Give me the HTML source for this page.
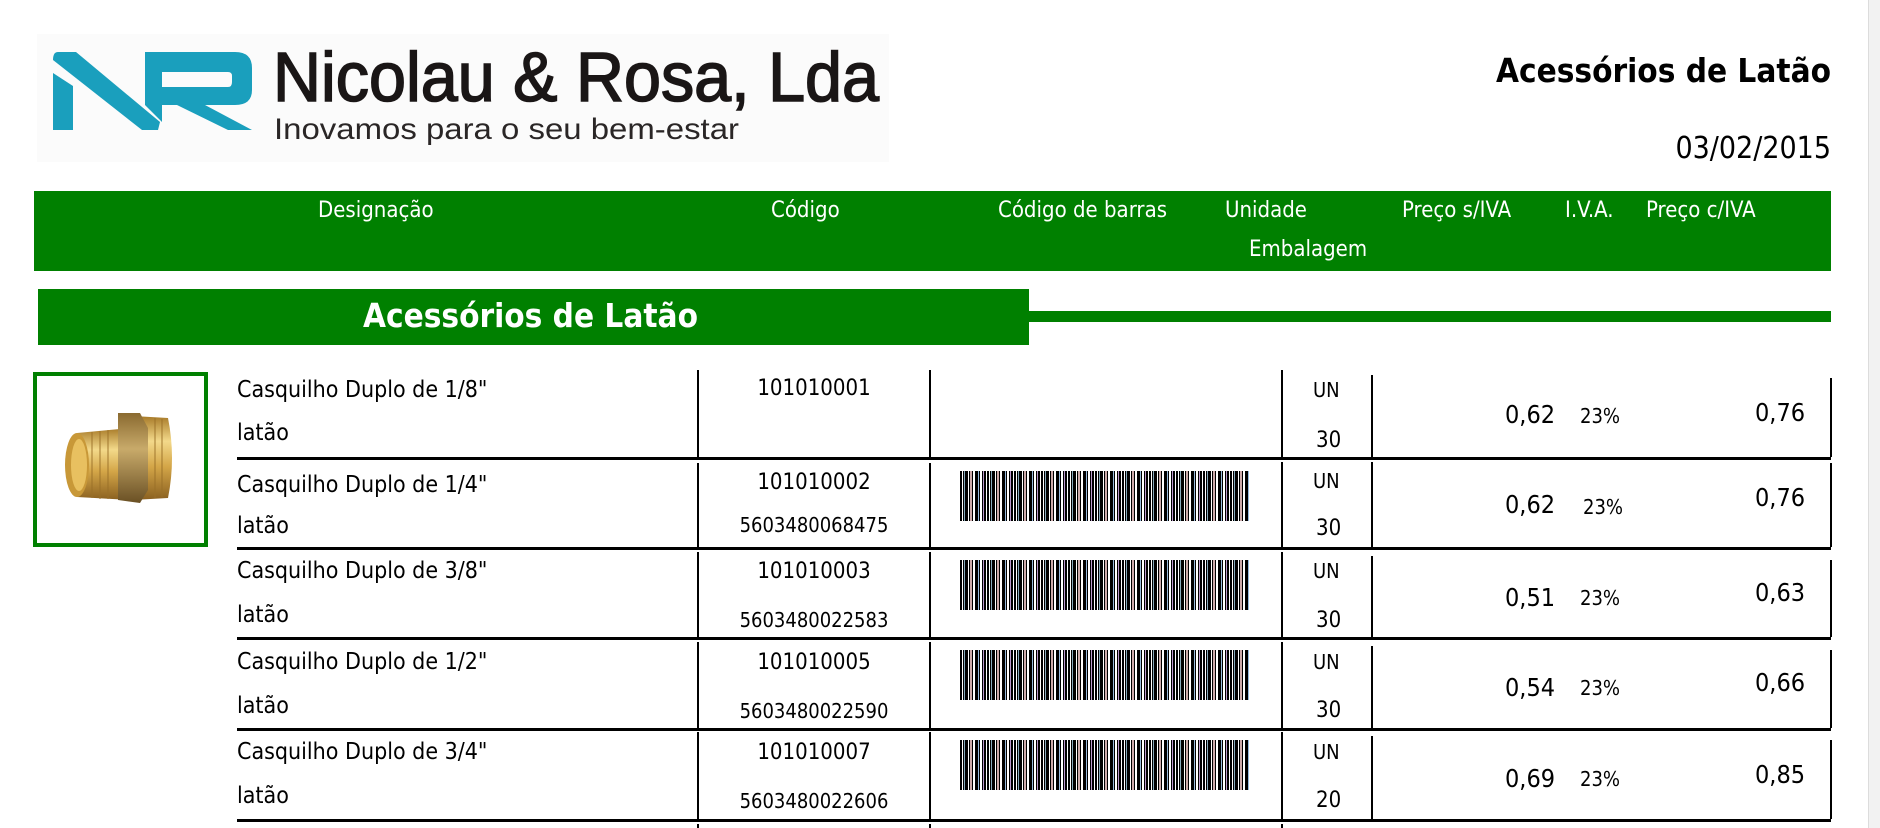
<!DOCTYPE html>
<html><head><meta charset="utf-8">
<style>
*{margin:0;padding:0;box-sizing:border-box}
body{width:1880px;height:828px;overflow:hidden;background:#fff;position:relative;font-family:"DejaVu Sans Condensed","DejaVu Sans","Liberation Sans",sans-serif;font-stretch:condensed;color:#000}
.a{position:absolute;white-space:nowrap;line-height:1}
.hd{color:#fff;font-size:22px}
.ds{font-size:23px;left:237px}
.cd{left:698px;width:232px;text-align:center}
.vl{position:absolute;width:2px;background:#000}
.hl{position:absolute;left:237px;width:1594px;height:3px;background:#000}
.bc{position:absolute;left:960px;width:289px;height:50px;background:repeating-linear-gradient(90deg,#000 0 2px,#fff 2px 3px,#000 3px 4px,#8ab 4px 5px,#000 5px 8px,#fff 8px 9px,#000 9px 10px,#caa 10px 12px,#000 12px 13px,#fff 13px 15px,#000 15px 18px,#9bd 18px 19px,#000 19px 20px,#fff 20px 22px,#000 22px 23px,#b9c 23px 24px,#000 24px 26px,#fff 26px 27px)}
</style></head><body>

<div style="position:absolute;left:37px;top:34px;width:852px;height:128px;background:#fbfbfb"></div>
<svg class="a" style="left:0;top:0" width="900" height="170">
<g fill="#1a9fbd">
<path d="M53 73 L73 86 L73 130 L53 130 Z"/>
<path d="M58 52 L76 52 L160 122 L158 130 L142 130 L53 60 Q53 52 58 52 Z"/>
<path d="M145 52 L235 52 Q252 52 252 68 L252 90 Q252 105 235 105 L205 105 L252 130 L228 130 L177 105 L162 105 L162 122 L158 118 L150 110 L145 105 Z M162 72 L162 87 L228 87 Q232 87 232 82 L232 76 Q232 72 228 72 Z" fill-rule="evenodd"/>
</g>
<text x="273" y="101" font-family="Liberation Sans, sans-serif" font-size="70" fill="#1a1616" stroke="#1a1616" stroke-width="1.6" textLength="606" lengthAdjust="spacingAndGlyphs">Nicolau &amp; Rosa, Lda</text>
<text x="274" y="139" font-family="Liberation Sans, sans-serif" font-size="30" fill="#2a2626" textLength="465" lengthAdjust="spacingAndGlyphs">Inovamos para o seu bem-estar</text>
</svg>

<div class="a" style="right:49px;top:54px;font-size:33px;font-weight:bold">Acessórios de Latão</div>
<div class="a" style="right:49px;top:134px;font-size:30px">03/02/2015</div>

<div style="position:absolute;left:34px;top:191px;width:1797px;height:80px;background:#008000"></div>
<div class="a hd" style="left:318px;top:200px">Designação</div>
<div class="a hd" style="left:771px;top:200px">Código</div>
<div class="a hd" style="left:998px;top:200px">Código de barras</div>
<div class="a hd" style="left:1225px;top:200px">Unidade</div>
<div class="a hd" style="left:1249px;top:239px">Embalagem</div>
<div class="a hd" style="left:1402px;top:200px">Preço s/IVA</div>
<div class="a hd" style="left:1565px;top:200px">I.V.A.</div>
<div class="a hd" style="left:1646px;top:200px">Preço c/IVA</div>

<div style="position:absolute;left:38px;top:289px;width:991px;height:56px;background:#008000"></div>
<div style="position:absolute;left:1029px;top:311px;width:802px;height:11px;background:#008000"></div>
<div class="a" style="left:363px;top:299px;font-size:33px;font-weight:bold;color:#fff">Acessórios de Latão</div>

<div style="position:absolute;left:33px;top:372px;width:175px;height:175px;border:4px solid #008000;background:#fff"></div>
<svg class="a" style="left:60px;top:405px" width="120" height="100" viewBox="60 405 120 100">
<defs>
<linearGradient id="g" x1="0" y1="0" x2="0" y2="1"><stop offset="0" stop-color="#a87a28"/><stop offset=".3" stop-color="#f3d98a"/><stop offset=".6" stop-color="#d4a648"/><stop offset="1" stop-color="#8a6020"/></linearGradient>
<linearGradient id="h" x1="0" y1="0" x2="0" y2="1"><stop offset="0" stop-color="#8a6a30"/><stop offset=".4" stop-color="#c8aa6a"/><stop offset="1" stop-color="#6a5024"/></linearGradient>
</defs>
<path d="M77 433 L130 428 L130 500 L77 497 Z" fill="url(#g)"/>
<path d="M133 416 L168 418 Q176 458 168 498 L133 500 Z" fill="url(#g)"/>
<path d="M118 413 L140 413 L148 428 L148 490 L140 503 L118 500 Z" fill="url(#h)"/>
<ellipse cx="77" cy="465" rx="12" ry="32" fill="#c89838"/>
<ellipse cx="79" cy="465" rx="8" ry="26" fill="#e8c060"/>
<g stroke="#9a7028" stroke-width="1.5" opacity=".6"><path d="M92 432 V498 M100 431 V499 M108 430 V499 M155 418 V498 M162 419 V497"/></g>
</svg>

<div class="a ds" style="top:379px">Casquilho Duplo de 1/8"</div>
<div class="a ds" style="top:422px">latão</div>
<div class="a cd" style="top:378px;font-size:22px">101010001</div>
<div class="a" style="left:1313px;top:380px;font-size:20px">UN</div>
<div class="a" style="left:1316px;top:430px;font-size:22px">30</div>
<div class="a" style="left:1505px;top:402px;font-size:25px">0,62</div>
<div class="a" style="left:1580px;top:406px;font-size:20px">23%</div>
<div class="a" style="left:1755px;top:400px;font-size:25px">0,76</div>
<div class="hl" style="top:457px"></div>

<div class="a ds" style="top:474px">Casquilho Duplo de 1/4"</div>
<div class="a ds" style="top:515px">latão</div>
<div class="a cd" style="top:472px;font-size:22px">101010002</div>
<div class="a cd" style="top:515px;font-size:20px">5603480068475</div>
<div class="bc" style="top:471px"></div>
<div class="a" style="left:1313px;top:471px;font-size:20px">UN</div>
<div class="a" style="left:1316px;top:518px;font-size:22px">30</div>
<div class="a" style="left:1505px;top:492px;font-size:25px">0,62</div>
<div class="a" style="left:1583px;top:497px;font-size:20px">23%</div>
<div class="a" style="left:1755px;top:485px;font-size:25px">0,76</div>
<div class="hl" style="top:547px"></div>

<div class="a ds" style="top:560px">Casquilho Duplo de 3/8"</div>
<div class="a ds" style="top:604px">latão</div>
<div class="a cd" style="top:561px;font-size:22px">101010003</div>
<div class="a cd" style="top:610px;font-size:20px">5603480022583</div>
<div class="bc" style="top:560px"></div>
<div class="a" style="left:1313px;top:561px;font-size:20px">UN</div>
<div class="a" style="left:1316px;top:610px;font-size:22px">30</div>
<div class="a" style="left:1505px;top:585px;font-size:25px">0,51</div>
<div class="a" style="left:1580px;top:588px;font-size:20px">23%</div>
<div class="a" style="left:1755px;top:580px;font-size:25px">0,63</div>
<div class="hl" style="top:637px"></div>

<div class="a ds" style="top:651px">Casquilho Duplo de 1/2"</div>
<div class="a ds" style="top:695px">latão</div>
<div class="a cd" style="top:652px;font-size:22px">101010005</div>
<div class="a cd" style="top:701px;font-size:20px">5603480022590</div>
<div class="bc" style="top:650px"></div>
<div class="a" style="left:1313px;top:652px;font-size:20px">UN</div>
<div class="a" style="left:1316px;top:700px;font-size:22px">30</div>
<div class="a" style="left:1505px;top:675px;font-size:25px">0,54</div>
<div class="a" style="left:1580px;top:678px;font-size:20px">23%</div>
<div class="a" style="left:1755px;top:670px;font-size:25px">0,66</div>
<div class="hl" style="top:728px"></div>

<div class="a ds" style="top:741px">Casquilho Duplo de 3/4"</div>
<div class="a ds" style="top:785px">latão</div>
<div class="a cd" style="top:742px;font-size:22px">101010007</div>
<div class="a cd" style="top:791px;font-size:20px">5603480022606</div>
<div class="bc" style="top:740px"></div>
<div class="a" style="left:1313px;top:742px;font-size:20px">UN</div>
<div class="a" style="left:1316px;top:790px;font-size:22px">20</div>
<div class="a" style="left:1505px;top:766px;font-size:25px">0,69</div>
<div class="a" style="left:1580px;top:769px;font-size:20px">23%</div>
<div class="a" style="left:1755px;top:762px;font-size:25px">0,85</div>
<div class="hl" style="top:819px"></div>

<div class="vl" style="left:697px;top:370px;height:87px"></div>
<div class="vl" style="left:929px;top:370px;height:87px"></div>
<div class="vl" style="left:1281px;top:370px;height:87px"></div>
<div class="vl" style="left:1371px;top:375px;height:82px"></div>
<div class="vl" style="left:1830px;top:378px;height:79px"></div>

<div class="vl" style="left:697px;top:463px;height:84px"></div>
<div class="vl" style="left:929px;top:463px;height:84px"></div>
<div class="vl" style="left:1281px;top:462px;height:85px"></div>
<div class="vl" style="left:1371px;top:462px;height:85px"></div>
<div class="vl" style="left:1830px;top:463px;height:84px"></div>

<div class="vl" style="left:697px;top:552px;height:85px"></div>
<div class="vl" style="left:929px;top:552px;height:85px"></div>
<div class="vl" style="left:1281px;top:552px;height:85px"></div>
<div class="vl" style="left:1371px;top:556px;height:81px"></div>
<div class="vl" style="left:1830px;top:560px;height:77px"></div>

<div class="vl" style="left:697px;top:642px;height:86px"></div>
<div class="vl" style="left:929px;top:642px;height:86px"></div>
<div class="vl" style="left:1281px;top:642px;height:86px"></div>
<div class="vl" style="left:1371px;top:646px;height:82px"></div>
<div class="vl" style="left:1830px;top:650px;height:78px"></div>

<div class="vl" style="left:697px;top:732px;height:87px"></div>
<div class="vl" style="left:929px;top:732px;height:87px"></div>
<div class="vl" style="left:1281px;top:732px;height:87px"></div>
<div class="vl" style="left:1371px;top:736px;height:83px"></div>
<div class="vl" style="left:1830px;top:740px;height:79px"></div>

<div class="vl" style="left:697px;top:824px;height:4px"></div>
<div class="vl" style="left:929px;top:824px;height:4px"></div>
<div class="vl" style="left:1281px;top:824px;height:4px"></div>

<div style="position:absolute;left:1868px;top:0;width:12px;height:828px;background:#f2f2f2;border-left:1px solid #dcdcdc"></div>
</body></html>
